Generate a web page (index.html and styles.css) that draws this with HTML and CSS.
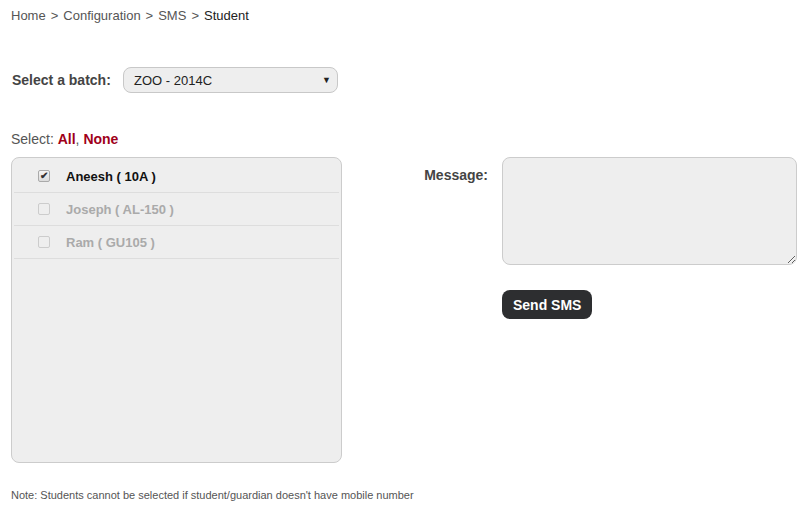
FILE: index.html
```html
<!DOCTYPE html>
<html lang="en">

<head>
    <meta charset="utf-8" />
    <title>SMS - Student</title>
    <link rel="stylesheet" href="styles.css">
</head>

<body>
    <div class="page">
        <!-- breadcrumb -->
        <div class="crumbs">
            <a href="#">Home</a><span class="sep">&gt;</span><a href="#">Configuration</a><span class="sep">&gt;</span><a href="#">SMS</a><span class="sep">&gt;</span><span class="current">Student</span>
        </div>

        <!-- batch selection -->
        <div class="batch-row">
            <label for="batch">Select a batch:</label>
            <div class="select-box">
                <span>ZOO - 2014C</span>
                <span class="arrow">&#9660;</span>
            </div>
        </div>

        <div class="select-links">
            Select: <a href="#">All</a>, <a href="#">None</a>
        </div>

        <div class="content">
            <!-- student list -->
            <div class="student-list">
                <div class="student">
                    <span class="check checked">&#10004;</span>
                    <span class="name">Aneesh ( 10A )</span>
                </div>
                <div class="student disabled">
                    <span class="check"></span>
                    <span class="name">Joseph ( AL-150 )</span>
                </div>
                <div class="student disabled">
                    <span class="check"></span>
                    <span class="name">Ram ( GU105 )</span>
                </div>
            </div>

            <!-- message -->
            <div class="message-box">
                <div class="message-row">
                    <label for="msg">Message:</label>
                    <textarea id="msg"></textarea>
                </div>
                <button class="send-btn">Send SMS</button>
            </div>
        </div>

        <p class="note">Note: Students cannot be selected if student/guardian doesn't have mobile number</p>
    </div>
</body>
</html>
```

FILE: styles.css
```css
body {
    margin: 0;
    font-family: "Liberation Sans", Arial, sans-serif;
    color: #555;
    background: #fff;
}

.page {
    padding: 8px 0 0 11px;
}

.crumbs {
    font-size: 13px;
    line-height: 15px;
    color: #555;
}

.crumbs a {
    color: #555;
    text-decoration: none;
}

.crumbs .sep {
    margin: 0 5px;
}

.crumbs .current {
    color: #222;
}

.batch-row {
    display: flex;
    align-items: center;
    margin-top: 44px;
}

.batch-row label {
    font-size: 14px;
    font-weight: bold;
    color: #444;
    width: 111px;
    padding-left: 1px;
}

.select-box {
    display: flex;
    justify-content: space-between;
    align-items: center;
    box-sizing: border-box;
    width: 215px;
    height: 26px;
    padding: 0 6px 0 10px;
    border: 1px solid #c8c8c8;
    border-radius: 8px;
    background: #eee;
    font-size: 13px;
    color: #222;
}

.select-box .arrow {
    font-size: 9px;
    color: #222;
}

.select-links {
    margin-top: 38px;
    font-size: 14px;
    color: #555;
}

.select-links a {
    color: #a0001a;
    font-weight: bold;
    text-decoration: none;
}

.content {
    display: flex;
    margin-top: 10px;
}

.student-list {
    flex-shrink: 0;
    box-sizing: border-box;
    width: 331px;
    height: 306px;
    padding: 2px 2px 0 2px;
    border: 1px solid #ccc;
    border-radius: 8px;
    background: #eee;
}

.student {
    display: flex;
    align-items: center;
    box-sizing: border-box;
    height: 33px;
    padding-top: 1px;
    border-bottom: 1px solid #ddd;
    font-size: 13px;
    font-weight: bold;
    color: #111;
}

.student.disabled {
    color: #aaa;
}

.check {
    box-sizing: border-box;
    width: 12px;
    height: 12px;
    margin: -2px 16px 0 24px;
    border: 1px solid #aaa;
    border-radius: 2px;
    background: linear-gradient(#f4f4f4, #dcdcdc);
    font-size: 10px;
    line-height: 10px;
    text-align: center;
    color: #333;
}

.student.disabled .check {
    border-color: #ccc;
    background: #eee;
}

.message-box {
    flex-shrink: 0;
    margin-left: 65px;
}

.message-row {
    display: flex;
}

.message-row label {
    width: 81px;
    padding: 10px 14px 0 0;
    text-align: right;
    font-size: 14px;
    font-weight: bold;
    color: #444;
}

.message-row textarea {
    box-sizing: border-box;
    width: 295px;
    height: 108px;
    border: 1px solid #ccc;
    border-radius: 8px;
    background: #eee;
}

.send-btn {
    display: block;
    margin: 25px 0 0 95px;
    height: 29px;
    padding: 0 11px;
    border: none;
    border-radius: 8px;
    background: #2d2e30;
    color: #fff;
    font-family: "Liberation Sans", Arial, sans-serif;
    font-size: 14px;
    font-weight: bold;
}

.note {
    margin: 26px 0 0 0;
    font-size: 11px;
    color: #555;
}
```
